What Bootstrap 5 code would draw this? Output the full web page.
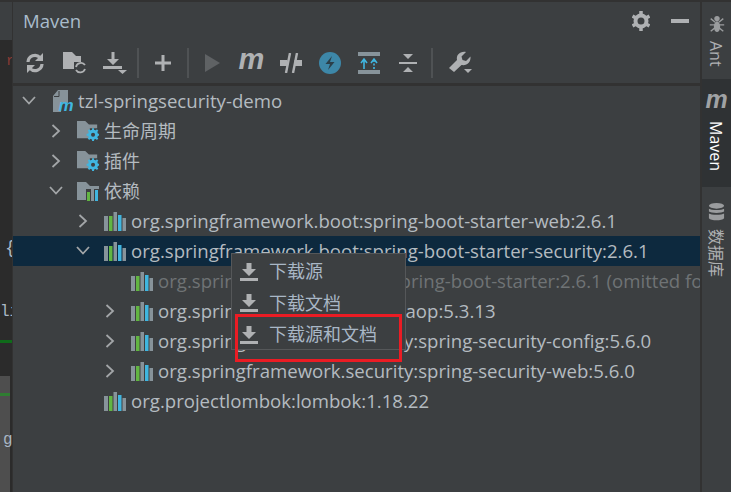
<!DOCTYPE html>
<html lang="zh">
<head>
<meta charset="utf-8">
<title>Maven</title>
<link rel="stylesheet" href="https://cdn.jsdelivr.net/npm/bootstrap@5.3.0/dist/css/bootstrap.min.css">
<style>
html,body{margin:0;width:731px;height:492px;overflow:hidden;background:#3c3f41}
body{font-family:"Open Sans","Noto Sans CJK SC",sans-serif;color:#b4bbc0;font-size:18.6px}
.ide-root{position:relative;width:731px;height:492px;overflow:hidden;border-top:2px solid #323232}
.side-left{width:12px;flex:none;background:#2b2b2b;position:relative;overflow:hidden;font-family:"Liberation Mono",monospace;color:#a9b7c6}
.left-top{height:38px;background:#3c3f41}
.left-code{height:336px;background:#2b2b2b;position:relative}
.left-gray{height:116px;background:#4e4e4e;margin-right:2px;position:relative}
.code-r{position:absolute;left:6px;top:13px;font-size:14px;line-height:16px;color:#8c3a34}
.code-brace{position:absolute;left:5px;top:198px;font-size:18px;line-height:20px}
.code-li{position:absolute;left:0;top:262px;font-size:16px;line-height:20px}
.code-g{position:absolute;left:3px;top:54px;font-size:16px;line-height:20px}
.green-a{position:absolute;left:0;top:300px;width:12px;height:3px;background:#0f6b1a}
.green-b{position:absolute;left:0;top:17px;width:10px;height:3px;background:#2f7d32}
.panel-main{width:688px;flex:none;border-left:1px solid #323232;min-width:0;overflow:hidden}
.panel-title{height:38px;padding:0 11px 0 10px;flex:none}
.title-text{color:#a9bccb;line-height:1}
.title-icons{gap:21px}
.tool-row{height:46px;flex:none;border-bottom:3px solid #323232;padding:3px 0 0 2px}
.tool-btn{width:40px;height:40px;flex:none}
.tool-tight{width:39px}
.tool-sep{width:2px;height:30px;background:#4f5254;flex:none;margin:0 4px}
.tool-sep-first{margin-left:2px}
.m-glyph{font-family:"Liberation Sans",sans-serif;font-weight:700;font-style:italic;color:#afb1b3;font-size:29px;line-height:1;margin-top:-8px}
.tree-line{height:30px;white-space:nowrap;color:#b4bbc0;line-height:30px}
.tree-line.is-sel{background:#0d293e}
.tree-line.is-dim .tree-label{color:#6f7375}
.lvl-0{padding-left:8px}.lvl-1{padding-left:35px}.lvl-2{padding-left:62px}.lvl-3{padding-left:89px}
.chev-box{width:16px;flex:none;margin-right:13px}
.ico-box{flex:none;width:22px;margin-right:5px}
.ico-root{margin-left:3px;width:20px}
.cjk-label{font-size:18px}
.side-right{width:31px;border-left:2px solid #323232;flex:none;color:#afb1b3}
.strip-tab{gap:8px}
.tab-ant{height:77px;padding-top:13px}
.tab-maven{height:108px;background:#2f3234;color:#fff;padding-top:17px}
.tab-db{flex:1;overflow:hidden;padding-top:16px}
.vtext{writing-mode:vertical-rl;text-orientation:sideways;line-height:1;white-space:nowrap;font-size:16px;margin-right:2px}
.m-small{font-family:"Liberation Sans",sans-serif;font-weight:700;font-style:italic;color:#a0a2a4;font-size:25px;line-height:1;margin-top:-9px;height:26px;flex:none}
.ctx-menu{position:absolute;left:231px;top:251px;width:175px;height:97px;background:#3c3f41;border:1px solid #555759;padding-top:2px}
.ctx-item{height:31.500px;padding-left:8px;gap:11px;color:#a9b7c6;font-size:18px;line-height:31px}
.mark-red{position:absolute;left:235px;top:312px;width:167px;height:48px;border:3px solid #ea1c24}
</style>
</head>
<body>
<svg width="0" height="0" class="position-absolute">
<defs>
<symbol id="i-lib" viewBox="0 0 22 19">
<rect x="0" y="4" width="4" height="15" fill="#87939a"/>
<rect x="5" y="4" width="3.500" height="15" fill="#62b543"/>
<rect x="9.500" y="0" width="3.500" height="19" fill="#87939a"/>
<rect x="14" y="3" width="3.500" height="16" fill="#40b6e0"/>
<rect x="18.500" y="6" width="3.500" height="13" fill="#87939a"/>
</symbol>
<symbol id="i-right" viewBox="0 0 12 14"><path d="M2.500 1l6.500 6-6.500 6" fill="none" stroke="#a3a6a8" stroke-width="1.800"/></symbol>
<symbol id="i-down" viewBox="0 0 14 12"><path d="M1 2l6 6.500 6-6.500" fill="none" stroke="#a3a6a8" stroke-width="1.800"/></symbol>
<symbol id="i-folder-gear" viewBox="0 0 24 22">
<path d="M0 0h9l4 4h9v4h-8v11H0z" fill="#87939a"/>
<circle cx="17.500" cy="15" r="4" fill="none" stroke="#40b6e0" stroke-width="3"/>
<path d="M17.500 8v14M10.500 15h14M12.500 10l10 10M22.500 10l-10 10" stroke="#40b6e0" stroke-width="2.200"/>
<circle cx="17.500" cy="15" r="2.200" fill="#3c3f41"/>
</symbol>
<symbol id="i-dl" viewBox="0 0 18 18"><path d="M6.500 0h5v6H16l-7 7-7-7h4.500z" fill="#afb1b3"/><rect x="0" y="15" width="18" height="3" fill="#afb1b3"/></symbol>
</defs>
</svg>
<div class="ide-root d-flex">
  <div class="side-left">
    <div class="left-top"></div>
    <div class="left-code">
      <span class="code-r">r</span>
      <span class="code-brace">{</span>
      <span class="code-li">li</span>
      <span class="green-a"></span>
    </div>
    <div class="left-gray"><span class="green-b"></span><span class="code-g">g</span></div>
  </div>
  <div class="panel-main d-flex flex-column">
    <div class="panel-title d-flex align-items-center justify-content-between">
      <span class="title-text">Maven</span>
      <span class="title-icons d-flex align-items-center">
        <svg width="18" height="20" viewBox="0 0 18 20"><circle cx="9" cy="10" r="5.500" fill="none" stroke="#afb1b3" stroke-width="4"/><path d="M9 0v4M9 16v4M0.500 5l3.500 2M14 13l3.500 2M0.500 15l3.500-2M14 7l3.500-2" stroke="#afb1b3" stroke-width="3.500"/></svg>
        <svg width="18" height="4" viewBox="0 0 18 4"><rect width="18" height="4" fill="#afb1b3"/></svg>
      </span>
    </div>
    <div class="tool-row d-flex align-items-center">
      <span class="tool-btn d-flex align-items-center justify-content-center"><svg width="20" height="20" viewBox="0 0 20 20"><path d="M3 9a7 7 0 0 1 12-4.500M17 11a7 7 0 0 1-12 4.500" fill="none" stroke="#afb1b3" stroke-width="3.200"/><path d="M18 0v8h-8zM2 20v-8h8z" fill="#afb1b3"/></svg></span>
      <span class="tool-btn d-flex align-items-center justify-content-center"><svg width="24" height="22" viewBox="0 0 24 22"><path d="M0 0h9l4 4h5v6h-7v7H0z" fill="#afb1b3"/><path d="M13 15a5 5 0 0 1 9-2M22 17a5 5 0 0 1-9 1" fill="none" stroke="#afb1b3" stroke-width="1.800"/></svg></span>
      <span class="tool-btn d-flex align-items-center justify-content-center"><svg width="24" height="24" viewBox="0 0 24 24"><path d="M8.500 1h3v7H16l-6 6-6-6h4.500z" fill="#afb1b3"/><rect x="0" y="15" width="19" height="3" fill="#afb1b3"/><path d="M15 19h9l-4.500 4z" fill="#afb1b3"/></svg></span>
      <span class="tool-sep tool-sep-first"></span>
      <span class="tool-btn d-flex align-items-center justify-content-center"><svg width="16" height="16" viewBox="0 0 16 16"><path d="M6.500 0h3v6.500H16v3H9.500V16h-3V9.500H0v-3h6.500z" fill="#afb1b3"/></svg></span>
      <span class="tool-sep"></span>
      <span class="tool-btn tool-tight d-flex align-items-center justify-content-center"><svg width="15" height="18" viewBox="0 0 15 18"><path d="M0 0l15 9-15 9z" fill="#5f6264"/></svg></span>
      <span class="tool-btn tool-tight d-flex align-items-center justify-content-center"><span class="m-glyph">m</span></span>
      <span class="tool-btn tool-tight d-flex align-items-center justify-content-center"><svg width="22" height="20" viewBox="0 0 22 20"><path d="M0 7h7.500v6H0zM14.500 7H22v6h-7.500z" fill="#afb1b3"/><path d="M10 0L6 20M17 0l-4 20" stroke="#afb1b3" stroke-width="2.400"/></svg></span>
      <span class="tool-btn tool-tight d-flex align-items-center justify-content-center"><svg width="22" height="22" viewBox="0 0 22 22"><circle cx="11" cy="11" r="11" fill="#3d87a8"/><path d="M13 4L6.500 12H11l-2 6 6.500-8H11z" fill="#2b3f4a"/></svg></span>
      <span class="tool-btn tool-tight d-flex align-items-center justify-content-center"><svg width="22" height="22" viewBox="0 0 22 22"><rect width="22" height="4" fill="#87939a"/><rect y="18" width="22" height="4" fill="#87939a"/><path d="M6 17V8M3 11l3-4 3 4" fill="none" stroke="#40b6e0" stroke-width="1.600"/><path d="M16 17V8" stroke="#40b6e0" stroke-width="1.600" stroke-dasharray="2 1.500"/><path d="M13 11l3-4 3 4" fill="none" stroke="#40b6e0" stroke-width="1.600"/></svg></span>
      <span class="tool-btn tool-tight d-flex align-items-center justify-content-center"><svg width="18" height="20" viewBox="0 0 18 20"><rect y="9" width="18" height="2" fill="#afb1b3"/><path d="M4 1h10l-5 5zM4 19h10l-5-5z" fill="#afb1b3"/></svg></span>
      <span class="tool-sep"></span>
      <span class="tool-btn d-flex align-items-center justify-content-center ms-1"><svg width="24" height="24" viewBox="0 0 24 24"><path d="M0 17L8 9C7 4 11 0 17 1L12.500 5.500 13.500 9 17 10 21.500 5.500C22 11 18 15 12.500 14L5 21z" fill="#afb1b3"/><path d="M15 18h8l-4 4z" fill="#afb1b3"/></svg></span>
    </div>
    <div>
      <div class="tree-line d-flex align-items-center lvl-0"><span class="chev-box d-flex justify-content-center"><svg width="14" height="12"><use href="#i-down"/></svg></span><span class="ico-box ico-root d-flex"><svg width="20" height="22" viewBox="0 0 20 22"><path d="M0 6l5-6h10v13H8v9H0z" fill="#87939a"/><path d="M1 6.500h5V1" fill="none" stroke="#3c3f41"/><text x="5.500" y="21" font-family="Liberation Sans, sans-serif" font-weight="700" font-style="italic" font-size="17" fill="#40b6e0">m</text></svg></span><span class="tree-label">tzl-springsecurity-demo</span></div>
      <div class="tree-line d-flex align-items-center lvl-1"><span class="chev-box d-flex justify-content-center"><svg width="12" height="14"><use href="#i-right"/></svg></span><span class="ico-box d-flex"><svg width="24" height="22"><use href="#i-folder-gear"/></svg></span><span class="tree-label cjk-label">生命周期</span></div>
      <div class="tree-line d-flex align-items-center lvl-1"><span class="chev-box d-flex justify-content-center"><svg width="12" height="14"><use href="#i-right"/></svg></span><span class="ico-box d-flex"><svg width="24" height="22"><use href="#i-folder-gear"/></svg></span><span class="tree-label cjk-label">插件</span></div>
      <div class="tree-line d-flex align-items-center lvl-1"><span class="chev-box d-flex justify-content-center"><svg width="14" height="12"><use href="#i-down"/></svg></span><span class="ico-box d-flex"><svg width="22" height="19" viewBox="0 0 22 19"><path d="M0 0h9l4 4h9v3H9v11H0z" fill="#87939a"/><rect x="10" y="10" width="3" height="9" fill="#62b543"/><rect x="14" y="6" width="3" height="13" fill="#87939a"/><rect x="18" y="8" width="3" height="11" fill="#40b6e0"/></svg></span><span class="tree-label cjk-label">依赖</span></div>
      <div class="tree-line d-flex align-items-center lvl-2"><span class="chev-box d-flex justify-content-center"><svg width="12" height="14"><use href="#i-right"/></svg></span><span class="ico-box d-flex"><svg width="22" height="19"><use href="#i-lib"/></svg></span><span class="tree-label">org.springframework.boot:spring-boot-starter-web:2.6.1</span></div>
      <div class="tree-line d-flex align-items-center lvl-2 is-sel"><span class="chev-box d-flex justify-content-center"><svg width="14" height="12"><use href="#i-down"/></svg></span><span class="ico-box d-flex"><svg width="22" height="19"><use href="#i-lib"/></svg></span><span class="tree-label">org.springframework.boot:spring-boot-starter-security:2.6.1</span></div>
      <div class="tree-line d-flex align-items-center lvl-3 is-dim"><span class="chev-box"></span><span class="ico-box d-flex"><svg width="22" height="19"><use href="#i-lib"/></svg></span><span class="tree-label">org.springframework.boot:spring-boot-starter:2.6.1 (omitted for duplicate)</span></div>
      <div class="tree-line d-flex align-items-center lvl-3"><span class="chev-box d-flex justify-content-center"><svg width="12" height="14"><use href="#i-right"/></svg></span><span class="ico-box d-flex"><svg width="22" height="19"><use href="#i-lib"/></svg></span><span class="tree-label">org.springframework:spring-aop:5.3.13</span></div>
      <div class="tree-line d-flex align-items-center lvl-3"><span class="chev-box d-flex justify-content-center"><svg width="12" height="14"><use href="#i-right"/></svg></span><span class="ico-box d-flex"><svg width="22" height="19"><use href="#i-lib"/></svg></span><span class="tree-label">org.springframework.security:spring-security-config:5.6.0</span></div>
      <div class="tree-line d-flex align-items-center lvl-3"><span class="chev-box d-flex justify-content-center"><svg width="12" height="14"><use href="#i-right"/></svg></span><span class="ico-box d-flex"><svg width="22" height="19"><use href="#i-lib"/></svg></span><span class="tree-label">org.springframework.security:spring-security-web:5.6.0</span></div>
      <div class="tree-line d-flex align-items-center lvl-2"><span class="chev-box"></span><span class="ico-box d-flex"><svg width="22" height="19"><use href="#i-lib"/></svg></span><span class="tree-label">org.projectlombok:lombok:1.18.22</span></div>
    </div>
  </div>
  <div class="side-right d-flex flex-column">
    <div class="strip-tab tab-ant d-flex flex-column align-items-center">
      <svg width="16" height="18" viewBox="0 0 16 20" class="flex-none"><ellipse cx="8" cy="4" rx="3" ry="3" fill="#9a9c9e"/><ellipse cx="8" cy="13" rx="3.500" ry="6" fill="#9a9c9e"/><path d="M1 4l5 4M15 4l-5 4M0 11h16M1 18l5-4M15 18l-5-4" stroke="#9a9c9e" stroke-width="1.500"/></svg>
      <span class="vtext">Ant</span>
    </div>
    <div class="strip-tab tab-maven d-flex flex-column align-items-center">
      <span class="m-small">m</span>
      <span class="vtext">Maven</span>
    </div>
    <div class="strip-tab tab-db d-flex flex-column align-items-center">
      <svg width="17" height="18" viewBox="0 0 17 19" class="flex-none"><ellipse cx="8.500" cy="3" rx="8" ry="3" fill="#9a9c9e"/><path d="M.5 6c2 2 14 2 16 0v3c-2 2-14 2-16 0zM.5 11c2 2 14 2 16 0v5c-2 3-14 3-16 0z" fill="#9a9c9e"/></svg>
      <span class="vtext">数据库</span>
    </div>
  </div>
  <div class="ctx-menu">
    <div class="ctx-item d-flex align-items-center"><svg width="18" height="18"><use href="#i-dl"/></svg><span>下载源</span></div>
    <div class="ctx-item d-flex align-items-center"><svg width="18" height="18"><use href="#i-dl"/></svg><span>下载文档</span></div>
    <div class="ctx-item d-flex align-items-center"><svg width="18" height="18"><use href="#i-dl"/></svg><span>下载源和文档</span></div>
  </div>
  <div class="mark-red"></div>
</div>
<script src="https://cdn.jsdelivr.net/npm/bootstrap@5.3.0/dist/js/bootstrap.bundle.min.js"></script>
</body>
</html>
